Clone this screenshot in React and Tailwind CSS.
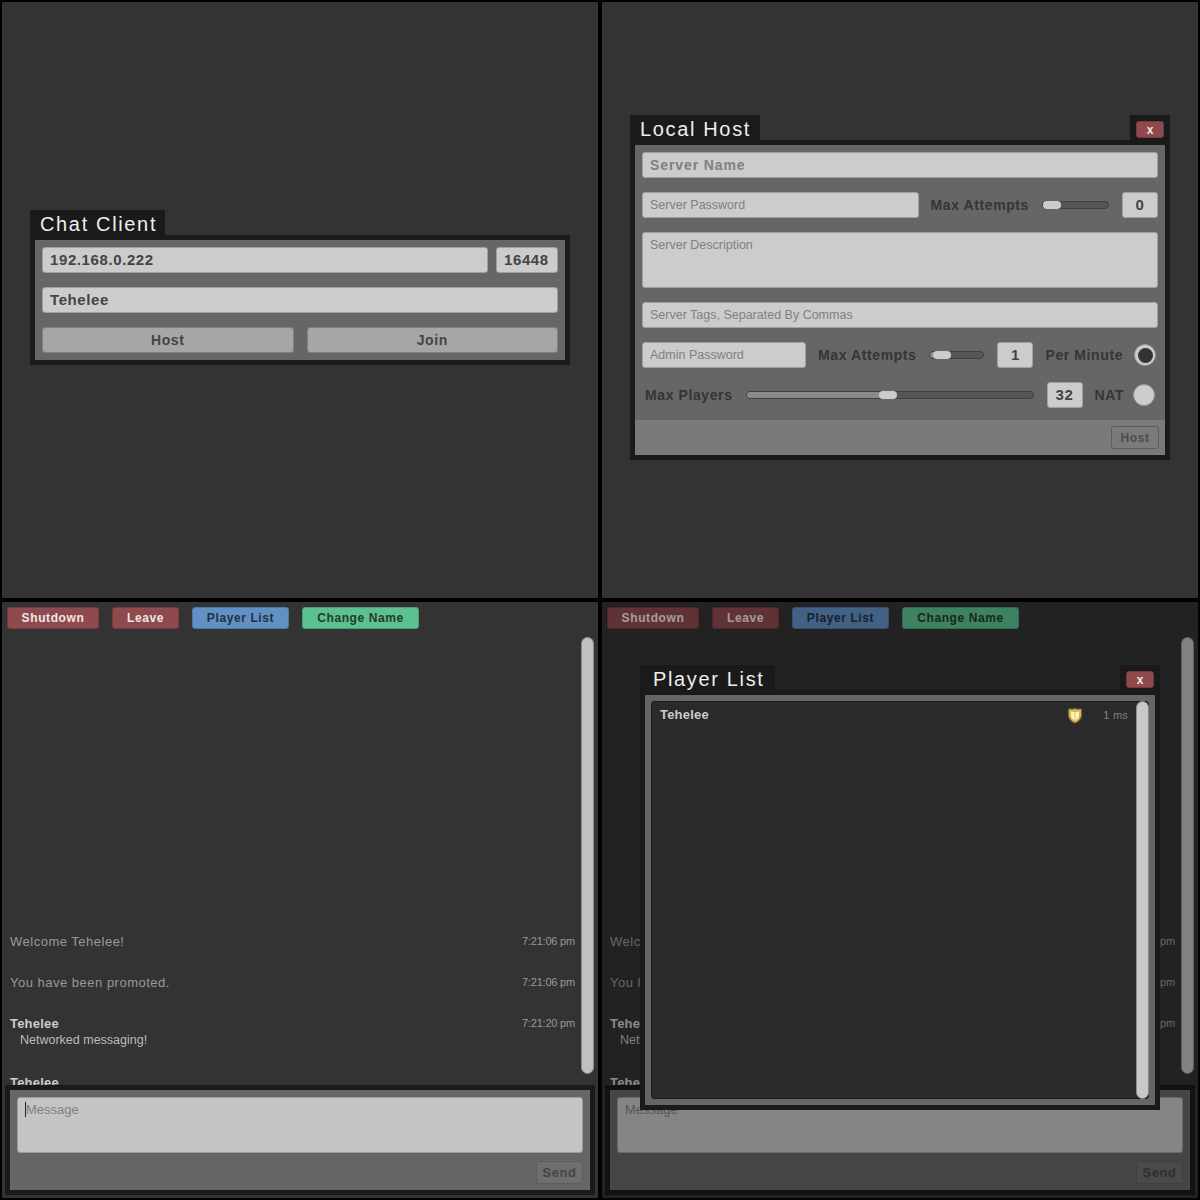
const Field = ({ children, muted, className = "" }) => (
  <div
    className={`flex items-center h-[26px] px-[7px] bg-[#cccccc] border border-[#a0a0a0] rounded-[3px] overflow-hidden whitespace-nowrap ${muted ? "text-[12.5px] text-[#808080]" : "text-[15px] font-bold tracking-[0.6px] text-[#444444]"} ${className}`}
  >
    {children}
  </div>
);

const NumberBox = ({ children }) => (
  <div className="flex items-center justify-center w-[36px] h-[26px] shrink-0 bg-[#cccccc] border border-[#a0a0a0] rounded-[3px] text-[15px] font-bold tracking-[0.6px] text-[#444444]">
    {children}
  </div>
);

const Label = ({ children, className = "" }) => (
  <div className={`shrink-0 text-[14px] font-bold tracking-[0.6px] text-[#353535] whitespace-nowrap ${className}`}>{children}</div>
);

const Slider = ({ width, fill, handle }) => (
  <div className={`relative h-[8px] shrink-0 bg-[#555555] border border-[#404040] rounded-full ${width}`}>
    <div className={`absolute left-0 top-0 h-full bg-[#8a8a8a] rounded-l-full ${fill}`} />
    <div className={`absolute top-[-1px] h-[8px] w-[18px] bg-[#cccccc] rounded-full ${handle}`} />
  </div>
);

const Radio = ({ on }) => (
  <div className="flex items-center justify-center w-[22px] h-[22px] shrink-0 bg-[#cccccc] border border-[#999999] rounded-full">
    {on && <div className="w-[15px] h-[15px] rounded-full bg-[#333333]" />}
  </div>
);

const CloseButton = () => (
  <div className="flex justify-center w-[40px] h-[25px] pt-[6px] bg-[#1a1a1a]">
    <div className="flex items-center justify-center w-[28px] h-[17px] bg-[#8f4a4e] border border-[#753a3e] rounded-[3px] text-[12px] leading-none font-bold text-[#f0e4e4]">
      x
    </div>
  </div>
);

const Dialog = ({ title, width, titleBox, closable, children }) => (
  <div className={`flex flex-col ${width}`}>
    <div className="flex justify-between h-[25px]">
      <div className={`flex items-center h-[25px] pt-[2px] bg-[#1a1a1a] text-[20px] tracking-[1.65px] text-[#eeeeee] ${titleBox}`}>{title}</div>
      {closable && <CloseButton />}
    </div>
    <div className="border-[5px] border-[#1a1a1a] bg-[#666666]">{children}</div>
  </div>
);

const ActionButton = ({ children }) => (
  <div className="flex items-center justify-center flex-1 h-[26px] bg-[#a6a6a6] border border-[#808080] rounded-[3px] text-[14px] font-bold tracking-[0.6px] text-[#444444]">
    {children}
  </div>
);

const GhostButton = ({ children, className = "" }) => (
  <div className={`flex items-center justify-center h-[23px] border border-[#5c5c5c] rounded-[3px] text-[13px] font-bold tracking-[0.6px] text-[#454545] ${className}`}>
    {children}
  </div>
);

const TabButton = ({ children, className }) => (
  <div className={`flex items-center justify-center h-[22px] rounded-[3px] border text-[12px] font-bold tracking-[0.6px] ${className}`}>
    {children}
  </div>
);

const SystemLine = ({ text, time }) => (
  <div className="flex justify-between items-center h-[17px] mb-[24px] text-[13px] tracking-[0.5px] text-[#999999]">
    <span>{text}</span>
    <span className="text-[11px] tracking-[-0.2px]">{time}</span>
  </div>
);

const ChatPane = ({ focused }) => (
  <div className="flex flex-col h-full">
    <div className="flex gap-[13px] pl-[5px] pt-[5px] h-[27px] shrink-0">
      <TabButton className="w-[92px] bg-[#8f4a4e] border-[#753a3e] text-[#f0e6e6]">Shutdown</TabButton>
      <TabButton className="w-[67px] bg-[#8f4a4e] border-[#753a3e] text-[#f0e6e6]">Leave</TabButton>
      <TabButton className="w-[97px] bg-[#6090c4] border-[#4d78a8] text-[#26303c]">Player List</TabButton>
      <TabButton className="w-[117px] bg-[#5cc08f] border-[#4aa078] text-[#243a30]">Change Name</TabButton>
    </div>
    <div className="flex flex-1 min-h-0">
      <div className="flex-1 min-w-0 pl-[8px] pr-[6px] pt-[304px]">
        <SystemLine text="Welcome Tehelee!" time="7:21:06 pm" />
        <SystemLine text="You have been promoted." time="7:21:06 pm" />
        <div className="flex justify-between items-center h-[17px] text-[13px] tracking-[0.2px] font-bold text-[#cccccc]">
          <span>Tehelee</span>
          <span className="text-[11px] font-normal tracking-[-0.2px] text-[#999999]">7:21:20 pm</span>
        </div>
        <div className="h-[17px] pl-[10px] text-[12.5px] leading-[17px] text-[#bbbbbb] mb-[25px]">Networked messaging!</div>
        <div className="h-[17px] leading-[17px] text-[13px] tracking-[0.2px] font-bold text-[#cccccc]">Tehelee</div>
      </div>
      <div className="w-[13px] h-[437px] mt-[8px] mr-[4px] shrink-0 bg-[#c0c0c0] border border-[#8a8a8a] rounded-full" />
    </div>
    <div className="mx-[3px] mb-[3px] shrink-0 border-[5px] border-[#1a1a1a] bg-[#666666] p-[7px] pb-[6px]">
      <div className="h-[56px] px-[7px] pt-[4px] bg-[#c4c4c4] border border-[#9a9a9a] rounded-[3px] text-[13px] leading-[15px] text-[#808080]">
        <span className={focused ? "border-l border-[#222222]" : ""}>Message</span>
      </div>
      <div className="flex justify-end mt-[8px]">
        <GhostButton className="w-[47px] bg-[#6e6e6e]">Send</GhostButton>
      </div>
    </div>
  </div>
);

const Shield = () => (
  <svg width="14" height="15" viewBox="0 0 14 15" className="shrink-0 drop-shadow-[0_0_1px_#e8d070]">
    <path d="M1 1 L4 2 L7 1 L10 2 L13 1 V7 C13 10.5 10 13 7 14.5 C4 13 1 10.5 1 7 Z" fill="#d8b84c" />
    <path d="M3 3.5 L6 4 V12 C4 11 3 9 3 7 Z M8 4 L11 3.5 V7 C11 9 10 11 8 12 Z" fill="#fdf3c0" />
    <path d="M6 4 H8 V12 L7 12.6 L6 12 Z" fill="#f0dc88" />
  </svg>
);

export default function App() {
  return (
    <div className="grid grid-cols-2 grid-rows-[600px_600px] w-[1200px] h-[1200px] bg-black font-['Liberation_Sans',sans-serif]">
      {/* Chat client */}
      <div className="flex flex-col items-center pt-[208px] border-2 border-black bg-[#333333]">
        <Dialog title="Chat Client" width="w-[540px]" titleBox="w-[135px] pl-[10px]">
          <div className="flex flex-col gap-[14px] p-[7px]">
            <div className="flex gap-[8px]">
              <Field className="flex-1">192.168.0.222</Field>
              <Field className="w-[62px]">16448</Field>
            </div>
            <Field>Tehelee</Field>
            <div className="flex gap-[13px]">
              <ActionButton>Host</ActionButton>
              <ActionButton>Join</ActionButton>
            </div>
          </div>
        </Dialog>
      </div>

      {/* Local host */}
      <div className="flex flex-col items-center pt-[113px] border-2 border-black bg-[#333333]">
        <Dialog title="Local Host" width="w-[540px]" titleBox="w-[130px] pl-[10px]" closable>
          <div className="flex flex-col gap-[14px] p-[7px] pb-[12px]">
            <Field className="text-[14px]! tracking-[0.9px]! text-[#808080]!">Server Name</Field>
            <div className="flex items-center">
              <Field muted className="flex-1">Server Password</Field>
              <Label className="ml-[12px]">Max Attempts</Label>
              <Slider width="w-[67px] ml-[13px]" fill="w-[10px]" handle="left-0" />
              <div className="ml-[13px]"><NumberBox>0</NumberBox></div>
            </div>
            <Field muted className="h-[56px] items-start pt-[3px]">Server Description</Field>
            <Field muted>Server Tags, Separated By Commas</Field>
            <div className="flex items-center">
              <Field muted className="w-[164px]">Admin Password</Field>
              <Label className="ml-[12px]">Max Attempts</Label>
              <Slider width="w-[55px] ml-[13px]" fill="w-[12px]" handle="left-[3px]" />
              <div className="ml-[13px]"><NumberBox>1</NumberBox></div>
              <Label className="ml-[12px] text-[#3c3c3c]">Per Minute</Label>
              <div className="ml-[11px]"><Radio on /></div>
            </div>
            <div className="flex items-center pl-[3px]">
              <Label className="text-[#3c3c3c]">Max Players</Label>
              <Slider width="w-[288px] ml-[13px]" fill="w-[140px]" handle="left-[132px]" />
              <div className="ml-[13px]"><NumberBox>32</NumberBox></div>
              <Label className="ml-[12px] text-[#3c3c3c] tracking-[0.4px]">NAT</Label>
              <div className="ml-[9px]"><Radio /></div>
            </div>
          </div>
          <div className="flex justify-end items-start h-[35px] bg-[#7a7a7a] pt-[6px] pr-[6px]">
            <GhostButton className="w-[48px] text-[12px]! text-[#4c4c4c]!">Host</GhostButton>
          </div>
        </Dialog>
      </div>

      {/* Chat */}
      <div className="border-2 border-black bg-[#333333]">
        <ChatPane focused />
      </div>

      {/* Chat with player list open */}
      <div className="relative border-2 border-black bg-[#333333]">
        <ChatPane />
        <div className="absolute inset-0 bg-black/32" />
        <div className="absolute inset-0 flex flex-col items-center pt-[63px]">
          <Dialog title="Player List" width="w-[520px]" titleBox="w-[135px] pl-[13px]" closable>
            <div className="p-[6px]">
              <div className="relative h-[398px] bg-[#2a2a2a] border border-[#1a1a1a] rounded-[3px]">
                <div className="flex items-center h-[26px] pl-[8px] pr-[20px] text-[13px] font-bold tracking-[0.2px] text-[#cccccc]">
                  <span className="flex-1">Tehelee</span>
                  <Shield />
                  <span className="w-[46px] text-right text-[11px] font-normal text-[#808080]">1 ms</span>
                </div>
                <div className="absolute top-[-1px] right-[-1px] w-[13px] h-[398px] bg-[#c8c8c8] border border-[#8a8a8a] rounded-full" />
              </div>
            </div>
          </Dialog>
        </div>
      </div>
    </div>
  );
}
